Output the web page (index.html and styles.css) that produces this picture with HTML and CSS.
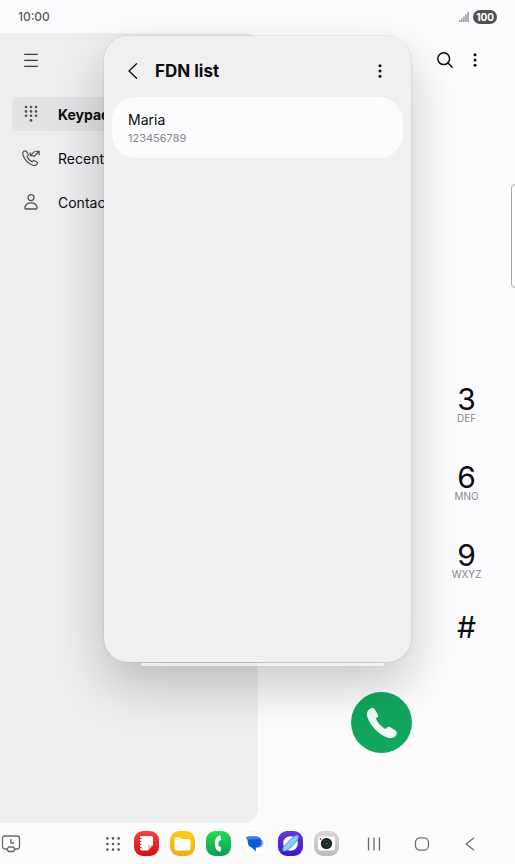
FILE: index.html
```html
<!DOCTYPE html>
<html lang="en">

<head>
    <meta charset="UTF-8">
    <meta name="viewport" content="width=device-width, initial-scale=1.0">
    <title>FDN list</title>
    <link rel="stylesheet" href="styles.css">
</head>

<body>
    <div class="screen">

        <header class="status-bar">
            <span class="clock">10:00</span>
            <svg class="signal" width="10" height="10" viewBox="0 0 10 10" fill="#929294">
                <rect x="0" y="8" width="1.4" height="2" />
                <rect x="2.1" y="6.5" width="1.4" height="3.5" />
                <rect x="4.2" y="4.5" width="1.4" height="5.5" />
                <rect x="6.3" y="2.2" width="1.4" height="7.8" />
                <rect x="8.4" y="0" width="1.4" height="10" />
            </svg>
            <span class="battery">100</span>
        </header>

        <main class="phone-app">
            <aside class="sidebar">
                <button class="icon-btn menu-btn" aria-label="Menu">
                    <svg width="16" height="16" viewBox="0 0 16 16" fill="none" stroke="#3c3c3e" stroke-width="1.3">
                        <path d="M1.2 2.3h13.6M1.2 8.300h13.600M1.200 14.300h13.600" />
                    </svg>
                </button>
                <nav class="side-nav">
                    <a href="#keypad" class="side-link active">
                        <svg width="20" height="20" viewBox="0 0 20 20" fill="#505052">
                            <circle cx="5" cy="3" r="1.3" /><circle cx="10" cy="3" r="1.3" /><circle cx="15" cy="3" r="1.3" />
                            <circle cx="5" cy="7.4" r="1.3" /><circle cx="10" cy="7.4" r="1.3" /><circle cx="15" cy="7.4" r="1.3" />
                            <circle cx="5" cy="11.8" r="1.3" /><circle cx="10" cy="11.8" r="1.3" /><circle cx="15" cy="11.8" r="1.3" />
                            <circle cx="10" cy="16.4" r="1.4" />
                        </svg>
                        <span>Keypad</span>
                    </a>
                    <a href="#recents" class="side-link">
                        <svg width="20" height="20" viewBox="0 0 20 20" fill="none" stroke="#505052" stroke-width="1.2" stroke-linecap="round" stroke-linejoin="round">
                            <path d="M3.2 3.1 C1.6 4.1 1.5 6 2.3 8 C4 12.2 7.6 15.7 11.8 17.2 C14 18 15.6 17.2 16.4 15.8 C16.7 15.2 16.5 14.7 16 14.3 L13.7 12.8 C13 12.3 12.4 12.5 12 13 L11.2 13.9 C9 12.9 7 10.9 6 8.7 L6.9 7.9 C7.4 7.4 7.4 6.9 7.1 6.3 L5.6 3.6 C5 2.6 4.1 2.6 3.2 3.1Z" />
                            <path d="M13.3 3.6 L9.3 7.6 M9.2 4.8 V7.7 H12.1 M13 8.5 L18 3.5 M14.8 3.3 H18.2 V6.7" />
                        </svg>
                        <span>Recents</span>
                    </a>
                    <a href="#contacts" class="side-link">
                        <svg width="20" height="20" viewBox="0 0 20 20" fill="none" stroke="#505052" stroke-width="1.3">
                            <circle cx="10" cy="5.6" r="3" />
                            <path d="M5.2 17H14.8C15.9 17 16.3 16.3 16.1 15.3C15.5 12.5 13.1 10.9 10 10.9S4.5 12.5 3.9 15.3C3.7 16.3 4.1 17 5.2 17Z" />
                        </svg>
                        <span>Contacts</span>
                    </a>
                </nav>
            </aside>

            <section class="keypad-pane">
                <div class="toolbar">
                    <button class="icon-btn" aria-label="Search">
                        <svg width="16" height="16" viewBox="0 0 16 16" fill="none" stroke="#0c0c0e" stroke-width="1.5" stroke-linecap="round">
                            <circle cx="6.7" cy="6.7" r="5.9" />
                            <path d="M11 11l4.2 4.2" />
                        </svg>
                    </button>
                    <button class="icon-btn" aria-label="More options">
                        <svg width="16" height="16" viewBox="0 0 16 16" fill="#0c0c0e">
                            <circle cx="8" cy="2.7" r="1.5" /><circle cx="8" cy="8" r="1.5" /><circle cx="8" cy="13.3" r="1.5" />
                        </svg>
                    </button>
                </div>
                <div class="dialpad">
                    <button class="dial-key">3<small>DEF</small></button>
                    <button class="dial-key">6<small>MNO</small></button>
                    <button class="dial-key">9<small>WXYZ</small></button>
                    <button class="dial-key">#</button>
                </div>
                <button class="call-btn" aria-label="Call">
                    <svg width="32" height="32" viewBox="0 0 32 32" fill="#f2f8f4">
                        <path d="M3.6 1.9 C5.5 .6 7.8 .5 8.9 2.4 L11.8 7.4 C12.6 8.8 12.1 9.9 10.8 10.8 L9.9 11.6 C11.4 15.6 15.4 19.8 19.6 22 L20.7 20.8 C21.8 19.7 23 19.5 24.3 20.3 L29.1 23.3 C31.1 24.5 31.2 26.5 30 28.4 C28.3 31 25.1 31.8 21.7 30.7 C12.6 27.8 3.8 18.6 1.2 9.6 C.3 6.4 1.1 3.6 3.6 1.9Z" />
                    </svg>
                </button>
            </section>
        </main>

        <footer class="taskbar">
            <button class="task-btn recent-app" aria-label="Recent app">
                <svg width="20" height="18" viewBox="0 0 20 18" fill="none" stroke="#68686b" stroke-width="1.3" stroke-linejoin="round">
                    <path d="M6 14H4Q1.5 14 1.5 11.5V3.5Q1.5 1 4 1H16Q18.5 1 18.5 3.5V11.5Q18.5 14 16 14H14" />
                    <path d="M9.8 4V8H13" />
                    <path d="M7.5 12H12.5L14 14.5L12.5 16.5H7.5L6 14.5Z" />
                </svg>
            </button>
            <div class="task-apps">
                <button class="task-btn" aria-label="All apps">
                    <svg width="16" height="16" viewBox="0 0 16 16" fill="#5a5a5d">
                        <circle cx="2.4" cy="2.4" r="1.3" /><circle cx="8" cy="2.4" r="1.3" /><circle cx="13.6" cy="2.4" r="1.3" />
                        <circle cx="2.4" cy="8" r="1.3" /><circle cx="8" cy="8" r="1.3" /><circle cx="13.6" cy="8" r="1.3" />
                        <circle cx="2.4" cy="13.6" r="1.3" /><circle cx="8" cy="13.6" r="1.3" /><circle cx="13.6" cy="13.6" r="1.3" />
                    </svg>
                </button>
                <button class="task-btn app" aria-label="Notes">
                    <svg width="25" height="25" viewBox="0 0 25 25">
                        <defs>
                            <linearGradient id="red" x2="0" y2="1"><stop stop-color="#f24340" /><stop offset="1" stop-color="#d90d12" /></linearGradient>
                        </defs>
                        <rect width="25" height="25" rx="9" fill="url(#red)" />
                        <path d="M7 5H17.5Q19 5 19 6.5V14L14 19.5H7.5Q6 19.5 6 18V6Q6 5 7 5Z" fill="#fff" />
                        <path d="M19 14L14 19.5V15.5Q14 14 15.5 14Z" fill="#f6b4b4" />
                        <path d="M5 7.5H7.5M5 10.5H7.5M5 13.5H7.5M5 16.5H7.5" stroke="#e52629" stroke-width="1.2" />
                    </svg>
                </button>
                <button class="task-btn app" aria-label="My Files">
                    <svg width="25" height="25" viewBox="0 0 25 25">
                        <defs>
                            <linearGradient id="yellow" x2="0" y2="1"><stop stop-color="#fccb1c" /><stop offset="1" stop-color="#f0ad0b" /></linearGradient>
                        </defs>
                        <rect width="25" height="25" rx="9" fill="url(#yellow)" />
                        <path d="M4.500 8Q4.500 6 6.500 6H10L12 8H18.500Q20.500 8 20.500 10V12H4.500Z" fill="#fdeeb4" />
                        <rect x="4.5" y="8.5" width="16" height="11" rx="1.8" fill="#fff" />
                    </svg>
                </button>
                <button class="task-btn app" aria-label="Phone">
                    <svg width="25" height="25" viewBox="0 0 25 25">
                        <defs>
                            <linearGradient id="green" x2="0" y2="1"><stop stop-color="#20dc59" /><stop offset="1" stop-color="#0c9e4f" /></linearGradient>
                        </defs>
                        <rect width="25" height="25" rx="9" fill="url(#green)" />
                        <path d="M13 4.5Q14.5 4 14.8 5.5L15.2 8Q15.3 9.4 14 9.6L12.8 9.9Q11.9 12.5 12.8 15.2L14 15.5Q15.3 15.8 15.2 17L14.8 19.5Q14.5 21 13 20.5Q8.8 18.5 8.8 12.5T13 4.5Z" fill="#fff" />
                    </svg>
                </button>
                <button class="task-btn app" aria-label="Messages">
                    <svg width="25" height="25" viewBox="0 0 25 25">
                        <rect x=".5" y=".5" width="24" height="24" rx="9" fill="#fff" stroke="#f4f4f6" />
                        <rect x="8" y="8" width="13.500" height="8.500" rx="4.200" fill="#86b2fa" />
                        <path d="M4 6.500Q5 5.500 8 5.500H14.500Q19.500 5.800 19.500 11T14.500 16.500H13.800V20.500L9.800 16.500Q5.800 15.500 5.800 11Q5.800 8.500 4 6.500Z" fill="#0b59d4" />
                        <path d="M4 6.500Q5 5.500 8 5.500H14.500Q17.500 5.500 18.800 8.200H8Q6.500 8.200 5.500 9.500Q5 7.500 4 6.500Z" fill="#3b7ff2" />
                    </svg>
                </button>
                <button class="task-btn app" aria-label="Internet">
                    <svg width="25" height="25" viewBox="0 0 25 25">
                        <defs>
                            <linearGradient id="violet" x2="0" y2="1"><stop stop-color="#6635dc" /><stop offset="1" stop-color="#4217c9" /></linearGradient>
                        </defs>
                        <rect width="25" height="25" rx="9" fill="url(#violet)" />
                        <circle cx="12.5" cy="12.5" r="7.3" fill="#fff" />
                        <path d="M6 15.500Q4.400 18.600 5.300 19.500C6.800 21 12 17.200 15.500 13.500C19.200 9.600 21 6 19.800 5C18.400 3.800 13.500 7.600 10 11.300C8.200 13.200 6.800 14.800 6 15.500" fill="#8fd0fa" stroke="#57b5f5" stroke-width="1.2" stroke-linejoin="round" />
                    </svg>
                </button>
                <button class="task-btn app" aria-label="Camera">
                    <svg width="25" height="25" viewBox="0 0 25 25">
                        <defs>
                            <linearGradient id="grey" x2="0" y2="1"><stop stop-color="#d8d8da" /><stop offset="1" stop-color="#bcbcc0" /></linearGradient>
                        </defs>
                        <rect width="25" height="25" rx="9" fill="url(#grey)" />
                        <rect x="4" y="5.5" width="17" height="14" rx="2.5" fill="#fff" />
                        <circle cx="12.5" cy="12.5" r="5.6" fill="#18191b" />
                        <circle cx="12.5" cy="12.5" r="3.3" fill="none" stroke="#41474b" />
                        <circle cx="12.5" cy="12.5" r="1.3" fill="#2c6a77" />
                        <circle cx="6.5" cy="8" r=".9" fill="#e8292b" />
                    </svg>
                </button>
            </div>
            <div class="task-nav">
                <button class="task-btn" aria-label="Recents">
                    <svg width="16" height="16" viewBox="0 0 16 16" fill="none" stroke="#6b6b6e" stroke-width="1.3">
                        <path d="M2.5 1.5V14.5M8 1.5V14.5M13.5 1.5V14.5" />
                    </svg>
                </button>
                <button class="task-btn" aria-label="Home">
                    <svg width="16" height="16" viewBox="0 0 16 16" fill="none" stroke="#6b6b6e" stroke-width="1.3">
                        <rect x="1.5" y="1.8" width="13" height="12.4" rx="4.5" />
                    </svg>
                </button>
                <button class="task-btn" aria-label="Back">
                    <svg width="16" height="16" viewBox="0 0 16 16" fill="none" stroke="#6b6b6e" stroke-width="1.3">
                        <path d="M12 1.8L4.2 8L12 14.2" />
                    </svg>
                </button>
            </div>
        </footer>

        <div class="edge-handle"></div>

        <!-- Popup window over the phone app -->
        <section class="popup">
            <header class="popup-header">
                <button class="icon-btn" aria-label="Back">
                    <svg width="16" height="16" viewBox="0 0 16 16" fill="none" stroke="#0c0c0e" stroke-width="1.3" stroke-linecap="round">
                        <path d="M11.5 .8L4 8L11.5 15.2" />
                    </svg>
                </button>
                <h1 class="popup-title">FDN list</h1>
                <button class="icon-btn" aria-label="More options">
                    <svg width="16" height="16" viewBox="0 0 16 16" fill="#0c0c0e">
                        <circle cx="8" cy="2.7" r="1.5" /><circle cx="8" cy="8" r="1.5" /><circle cx="8" cy="13.3" r="1.5" />
                    </svg>
                </button>
            </header>
            <a href="#maria" class="contact-card">
                <span class="contact-name">Maria</span>
                <span class="contact-number">123456789</span>
            </a>
        </section>
    </div>
</body>

</html>
```
FILE: styles.css
```css
* {
    box-sizing: border-box;
}

body {
    margin: 0;
    font-family: Inter, Roboto, sans-serif;
    background-color: #fcfcfe;
    color: #0c0c0e;
}

button {
    padding: 0;
    border: none;
    background: none;
    font-family: inherit;
    color: inherit;
    cursor: pointer;
}

a {
    color: inherit;
    text-decoration: none;
}

svg {
    display: block;
    flex-shrink: 0;
}

.screen {
    position: relative;
    display: flex;
    flex-direction: column;
    min-height: 100vh;
    overflow: hidden;
}

.icon-btn {
    display: flex;
    align-items: center;
    justify-content: center;
    width: 30px;
    height: 30px;
}

/* Status bar */
.status-bar {
    display: flex;
    align-items: center;
    height: 33px;
    padding: 0 18px;
}

.clock {
    margin-right: auto;
    font-size: 12px;
    font-weight: 500;
    line-height: 14px;
    color: #5a5a5c;
}

.signal {
    margin-right: 4px;
}

.battery {
    padding: 0 3px;
    border-radius: 7px;
    background-color: #505052;
    color: #fff;
    font-size: 10px;
    font-weight: 700;
    line-height: 14px;
}

/* Phone app */
.phone-app {
    display: flex;
    flex: 1;
}

.sidebar {
    width: 50%;
    padding: 12px;
    border-radius: 0 14px 14px 0;
    background-color: #eeeef0;
}

.menu-btn {
    margin-left: 4px;
}

.side-nav {
    display: flex;
    flex-direction: column;
    gap: 10px;
    margin-top: 22px;
}

.side-link {
    display: flex;
    align-items: center;
    gap: 17px;
    height: 34px;
    padding: 0 9px;
    border-radius: 7px;
    font-size: 14px;
}

.side-link.active {
    background-color: #e2e2e4;
    font-weight: 700;
}

.keypad-pane {
    display: flex;
    flex-direction: column;
    align-items: center;
    width: 50%;
    padding: 12px 9px 70px 0;
}

.toolbar {
    display: flex;
    align-self: flex-end;
    padding-right: 16px;
    margin-bottom: auto;
}

.dialpad {
    display: grid;
    grid-template-columns: repeat(3, 1fr);
    grid-template-rows: 78px 78px 72px 80px;
    column-gap: 6px;
    align-items: start;
    width: 100%;
}

.dial-key {
    display: flex;
    flex-direction: column;
    align-items: center;
    grid-column: 3;
    padding-top: 1px;
    font-size: 30px;
    line-height: 28px;
}

.dial-key small {
    font-size: 10px;
    line-height: 10px;
    color: #88888a;
}

.call-btn {
    display: flex;
    align-items: center;
    justify-content: center;
    width: 61px;
    height: 61px;
    border-radius: 50%;
    background-color: #13a65f;
}

/* Taskbar */
.taskbar {
    display: flex;
    align-items: center;
    height: 41px;
    padding-right: 21px;
}

.task-btn {
    display: flex;
    align-items: center;
    justify-content: center;
    width: 30px;
    height: 40px;
}

.recent-app {
    width: 22px;
}

.task-apps {
    display: flex;
    margin-left: auto;
    margin-right: 6px;
}

.app {
    width: 36px;
}

.task-nav {
    display: flex;
}

.task-nav .task-btn {
    width: 48px;
}

.edge-handle {
    position: absolute;
    top: 184px;
    right: -6px;
    width: 10px;
    height: 104px;
    border: 1px solid #a8a8aa;
    border-radius: 4px;
    background-color: #fff;
}

/* Popup window */
.popup {
    position: absolute;
    top: 36px;
    right: 104px;
    bottom: 202px;
    left: 104px;
    padding: 0 8px;
    border-radius: 24px;
    background-color: #f0f0f2;
    box-shadow: 0 0 1px 1px rgba(0, 0, 0, 0.06), 0 22px 52px rgba(0, 0, 0, 0.22);
}

/* Light strip under the bottom edge */
.popup::after {
    content: "";
    position: absolute;
    right: 27px;
    bottom: -4px;
    left: 37px;
    height: 3px;
    background-color: rgba(255, 255, 255, 0.7);
}

.popup-header {
    display: flex;
    align-items: center;
    height: 61px;
    padding: 8px 8px 0 6px;
}

.popup-title {
    flex: 1;
    margin: 0 0 0 7px;
    font-size: 17px;
    font-weight: 700;
}

.contact-card {
    display: flex;
    flex-direction: column;
    justify-content: center;
    min-height: 61px;
    padding: 12px 16px;
    border-radius: 24px;
    background-color: #fcfcfe;
}

.contact-name {
    font-size: 14px;
    line-height: 20px;
}

.contact-number {
    font-size: 11px;
    line-height: 16px;
    color: #88888a;
}
```
